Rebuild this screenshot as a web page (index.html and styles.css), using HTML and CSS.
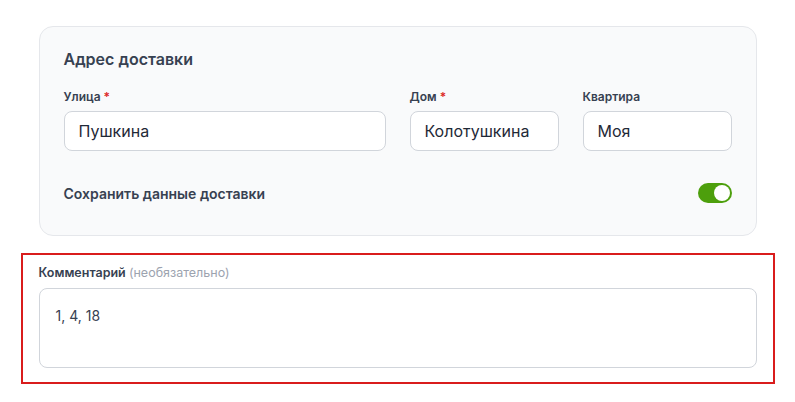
FILE: index.html
```html
<!DOCTYPE html>
<html lang="ru">
<head>
  <meta charset="UTF-8" />
  <meta name="viewport" content="width=device-width, initial-scale=1.0" />
  <title>Адрес доставки</title>
  <link rel="stylesheet" href="styles.css">
</head>
<body>
<div class="container">
  <div class="card">
    <h2 class="card__title">Адрес доставки</h2>
    <div class="form__grid">
      <div class="form__unit form__unit--wide">
        <label class="form__title" for="street">Улица <span class="req">*</span></label>
        <input type="text" id="street" value="Пушкина" />
      </div>
      <div class="form__unit">
        <label class="form__title" for="house">Дом <span class="req">*</span></label>
        <input type="text" id="house" value="Колотушкина" />
      </div>
      <div class="form__unit">
        <label class="form__title" for="flat">Квартира</label>
        <input type="text" id="flat" value="Моя" />
      </div>
    </div>
    <div class="save-row">
      <span class="save-row__label">Сохранить данные доставки</span>
      <label class="switch">
        <input type="checkbox" checked />
        <span class="switch__track"><span class="switch__knob"></span></span>
      </label>
    </div>
  </div>
  <div class="comment">
    <label class="form__title" for="comment">Комментарий <span class="optional">(необязательно)</span></label>
    <textarea id="comment">1, 4, 18</textarea>
  </div>
</div>
</body>
</html>
```

FILE: styles.css
```css
* {
  box-sizing: border-box;
}
html {
  font-family: Inter, "Noto Sans", "Helvetica Neue", Arial, sans-serif;
  color: #374151;
  line-height: 1.5;
}
body {
  margin: 0;
  background: #fff;
}
.container {
  width: 718px;
  margin: 26px auto 0;
}
.card {
  background: #f9fafb;
  border: 1px solid #e5e7eb;
  border-radius: 14px;
  padding: 20px 24px 30px;
}
.card__title {
  margin: 0 0 17px;
  font-size: 16px;
  line-height: 24px;
  font-weight: 600;
  color: #374151;
}
.form__grid {
  display: grid;
  grid-template-columns: repeat(4, 1fr);
  gap: 24px;
}
.form__unit--wide {
  grid-column: span 2;
}
.form__title {
  display: block;
  font-size: 12px;
  line-height: 18px;
  font-weight: 600;
  color: #374151;
  margin-bottom: 5px;
}
.req {
  color: #dc2626;
}
.optional {
  color: #9ca3af;
  font-weight: 400;
}
input[type="text"] {
  display: block;
  width: 100%;
  height: 40px;
  padding: 0 14px;
  border: 1px solid #d1d5db;
  border-radius: 8px;
  background: #fff;
  font: inherit;
  font-size: 16px;
  color: #1f2937;
  outline: none;
}
.save-row {
  display: flex;
  align-items: center;
  justify-content: space-between;
  margin-top: 30px;
  height: 24px;
}
.save-row__label {
  font-size: 14px;
  font-weight: 600;
  color: #374151;
}
.switch input {
  display: none;
}
.switch__track {
  display: flex;
  align-items: center;
  justify-content: flex-end;
  width: 34px;
  height: 20px;
  padding: 2px;
  border-radius: 10px;
  background: #4d9f0c;
}
.switch__knob {
  width: 16px;
  height: 16px;
  border-radius: 50%;
  background: #fff;
}
.comment {
  margin: 17px -18px 0;
  border: 2px solid #d91c1c;
  padding: 9px 16px 14px;
}
.comment .form__title {
  font-size: 12.5px;
  margin-bottom: 6px;
}
textarea {
  display: block;
  width: 100%;
  height: 80px;
  padding: 16px;
  border: 1px solid #d1d5db;
  border-radius: 8px;
  font: inherit;
  font-size: 14px;
  line-height: 22px;
  color: #374151;
  resize: none;
  outline: none;
}
```
